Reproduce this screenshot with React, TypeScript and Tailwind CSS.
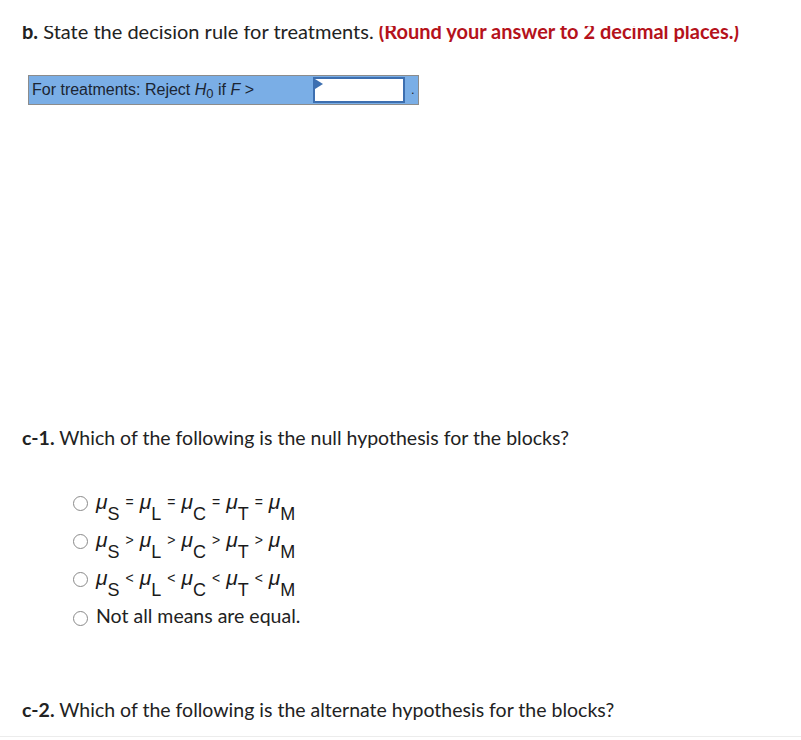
import React from 'react'

const sans = { fontFamily: 'Lato, "Open Sans", sans-serif' }

function Mu({ sub }: { sub: string }) {
  return (
    <span className="italic">
      μ<sub className="not-italic text-[18px] align-[-6px]">{sub}</sub>
    </span>
  )
}

function Radio() {
  return <span className="inline-block w-[15px] h-[15px] rounded-full border border-[#8a8a8a] bg-white mr-[8px] relative top-[1px]" />
}

function MuRow({ op }: { op: string }) {
  const subs = ['S', 'L', 'C', 'T', 'M']
  return (
    <div className="flex items-center h-[38px] text-[#1a1a1a]" style={{ fontFamily: '"Liberation Sans", Arial, sans-serif' }}>
      <Radio />
      <span className="text-[21px] whitespace-nowrap">
        {subs.map((s, i) => (
          <span key={s}>
            <Mu sub={s} />
            {i < subs.length - 1 && <span className="text-[14px] mx-[6px] relative top-[-2px]">{op}</span>}
          </span>
        ))}
      </span>
    </div>
  )
}

export default function App() {
  return (
    <div className="w-[801px] h-[740px] bg-white relative overflow-hidden" style={sans}>
      <div className="h-[26px]" />
      <div className="h-[16px] overflow-hidden">
        <p className="mt-[-8px] pl-[22px] text-[20px] leading-[26px] text-[#222] whitespace-nowrap">
          <b>b.</b> State the decision rule for treatments.{' '}
          <b className="text-[#b5121b]">(Round your answer to 2 decimal places.)</b>
        </p>
      </div>

      <div className="mt-[33px] ml-[28px] w-[391px] h-[30px] bg-[#7aaee6] border border-[#8c8c8c] flex items-center"
        style={{ fontFamily: '"Liberation Sans", Arial, sans-serif' }}>
        <span className="pl-[3px] text-[16px] text-[#1b2533] w-[284px]">
          For treatments: Reject <i>H</i><sub className="text-[13px]">0</sub> if <i>F</i> &gt;
        </span>
        <span className="relative w-[92px] h-[26px] bg-white border-2 border-[#3d6fb0] box-border">
          <span className="absolute left-0 top-0 w-0 h-0 border-t-[5px] border-b-[5px] border-l-[8px] border-t-transparent border-b-transparent border-l-[#3d6fb0]" />
        </span>
        <span className="ml-[6px] text-[13px] text-[#222]">.</span>
      </div>

      <p className="mt-[321px] pl-[22px] text-[19.5px] leading-[24px] text-[#222] whitespace-nowrap">
        <b>c-1.</b> Which of the following is the null hypothesis for the blocks?
      </p>

      <div className="mt-[33px] pl-[73px]">
        <MuRow op="=" />
        <MuRow op=">" />
        <MuRow op="<" />
        <div className="flex items-center h-[38px] text-[19.5px] text-[#222]">
          <span className="inline-block w-[15px] h-[15px] rounded-full border border-[#8a8a8a] bg-white mr-[8px] relative top-[2px]" />
          Not all means are equal.
        </div>
      </div>

      <p className="mt-[63px] pl-[22px] text-[19.5px] leading-[24px] text-[#222] whitespace-nowrap">
        <b>c-2.</b> Which of the following is the alternate hypothesis for the blocks?
      </p>

      <div className="absolute left-0 right-0 top-[736px] h-[1px] bg-[#ececec]" />
    </div>
  )
}
